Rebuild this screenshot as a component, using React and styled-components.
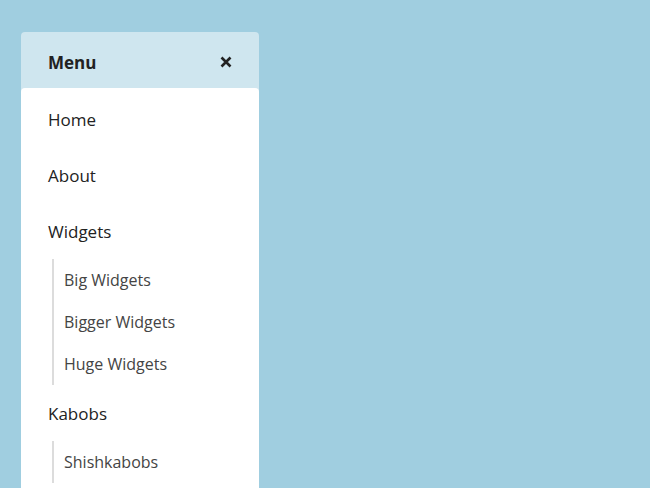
import React from 'react'
import styled, { createGlobalStyle } from 'styled-components'

const Global = createGlobalStyle`
  html, body {
    margin: 0;
    padding: 0;
    background: #a0cee0;
    font-family: "Open Sans", "Noto Sans", sans-serif;
  }
`

const Page = styled.div`
  width: 650px;
  height: 488px;
  overflow: hidden;
  padding: 32px 0 0 21px;
  box-sizing: border-box;
`

const Panel = styled.nav`
  width: 238px;
  border-radius: 4px 4px 0 0;
  background: #cfe6ef;
`

const Header = styled.div`
  height: 56px;
  box-sizing: border-box;
  display: flex;
  align-items: center;
  justify-content: space-between;
  padding: 4px 27px 0 27px;
`

const Title = styled.div`
  font-weight: 700;
  font-size: 17px;
  color: #222;
`

const Close = styled.button`
  border: 0;
  background: none;
  padding: 0;
  width: 12px;
  height: 12px;
  display: flex;
  cursor: pointer;
`

const Body = styled.ul`
  list-style: none;
  margin: 0;
  padding: 3px 0 0;
  background: #fff;
  border-radius: 4px 4px 0 0;
  min-height: 420px;
`

const Item = styled.li`
  height: 56px;
  display: flex;
  align-items: center;
  padding-left: 27px;
  font-size: 17px;
  color: #222;
`

const SubList = styled.ul`
  list-style: none;
  margin: 0 0 0 31px;
  padding: 0 0 0 10px;
  border-left: 2px solid #dcdcdc;
`

const SubItem = styled.li`
  height: 42px;
  display: flex;
  align-items: center;
  font-size: 16px;
  color: #444;
`

const menu = [
  { label: 'Home' },
  { label: 'About' },
  { label: 'Widgets', children: ['Big Widgets', 'Bigger Widgets', 'Huge Widgets'] },
  { label: 'Kabobs', children: ['Shishkabobs'] },
]

const App = () => {
  return (
    <Page>
      <Global />
      <Panel>
        <Header>
          <Title>Menu</Title>
          <Close aria-label="Close">
            <svg width="12" height="12" viewBox="0 0 12 12">
              <path d="M1.5 1.5 L10.5 10.5 M10.5 1.5 L1.5 10.5" stroke="#222" strokeWidth="2.6" />
            </svg>
          </Close>
        </Header>
        <Body>
          {menu.map((m) => (
            <React.Fragment key={m.label}>
              <Item>{m.label}</Item>
              {m.children && (
                <li>
                  <SubList>
                    {m.children.map((c) => (
                      <SubItem key={c}>{c}</SubItem>
                    ))}
                  </SubList>
                </li>
              )}
            </React.Fragment>
          ))}
        </Body>
      </Panel>
    </Page>
  )
}

export default App
